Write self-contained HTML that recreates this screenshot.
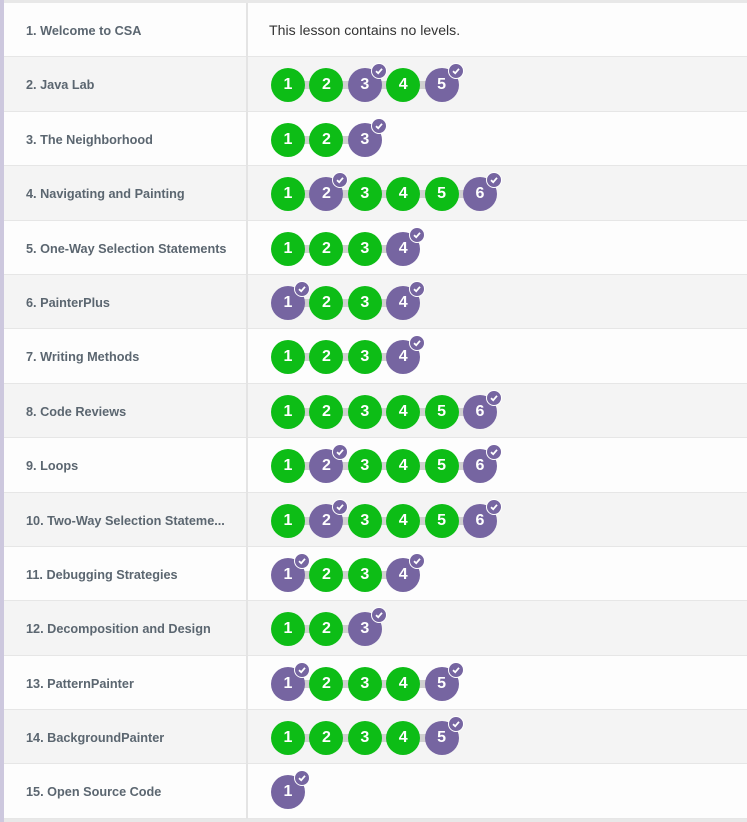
<!DOCTYPE html>
<html><head><meta charset="utf-8"><style>
*{margin:0;padding:0;box-sizing:border-box}
body{width:747px;height:822px;overflow:hidden;background:#e8e8e8;font-family:"Liberation Sans",sans-serif;position:relative}
#lb{position:absolute;left:0;top:0;width:4px;height:822px;background:#cdc8de}
#t{position:absolute;left:4px;top:3px;width:743px}
.r{height:54.4px;position:relative;border-bottom:1px solid #e6e6e6}
.r:nth-child(odd){background:#fdfdfd}.r:nth-child(even){background:#f4f4f4}
.l{position:absolute;left:22px;top:1px;line-height:54px;font-size:12.7px;font-weight:bold;color:#5b6670;white-space:nowrap}
.d{position:absolute;left:242px;top:0;bottom:-1px;width:2px;background:#e4e4e4}
.n{position:absolute;left:265px;top:0;line-height:54px;font-size:14.1px;color:#333}
.bar{position:absolute;top:24px;height:8px;background:#d0d0d0;left:270px}
.b{position:absolute;top:11px;width:34px;height:34px;border-radius:50%;color:#fff;font-weight:bold;font-size:16px;text-align:center;line-height:34px}
.g{background:#0dbd16}.p{background:#7665a1}
.c{position:absolute;right:-5px;top:-5px;width:16px;height:16px;border-radius:50%;background:#7665a1;border:1.5px solid #fff}
.c svg{position:absolute;left:2px;top:2px}
</style></head><body><div id="lb"></div><div id="t"></div>
<script>
var d=[["1. Welcome to CSA",""],["2. Java Lab","GGPGP"],["3. The Neighborhood","GGP"],["4. Navigating and Painting","GPGGGP"],["5. One-Way Selection Statements","GGGP"],["6. PainterPlus","PGGP"],["7. Writing Methods","GGGP"],["8. Code Reviews","GGGGGP"],["9. Loops","GPGGGP"],["10. Two-Way Selection Stateme...","GPGGGP"],["11. Debugging Strategies","PGGP"],["12. Decomposition and Design","GGP"],["13. PatternPainter","PGGGP"],["14. BackgroundPainter","GGGGP"],["15. Open Source Code","P"]];
var h="";
d.forEach(function(r){h+='<div class="r"><div class="l">'+r[0]+'</div><div class="d"></div>';
if(!r[1])h+='<div class="n">This lesson contains no levels.</div>';
else{var n=r[1].length;if(n>1)h+='<div class="bar" style="width:'+((n-1)*38.4)+'px;left:283px"></div>';
for(var i=0;i<n;i++){var p=r[1][i]=="P";h+='<div class="b '+(p?'p':'g')+'" style="left:'+(267+i*38.4)+'px">'+(i+1)+(p?'<div class="c"><svg width="10" height="10" viewBox="0 0 10 10"><path d="M2 5.2L4.2 7.2L8 2.8" stroke="#fff" stroke-width="1.8" fill="none"/></svg></div>':'')+'</div>';}}
h+='</div>';});
document.getElementById("t").innerHTML=h;
</script></body></html>
